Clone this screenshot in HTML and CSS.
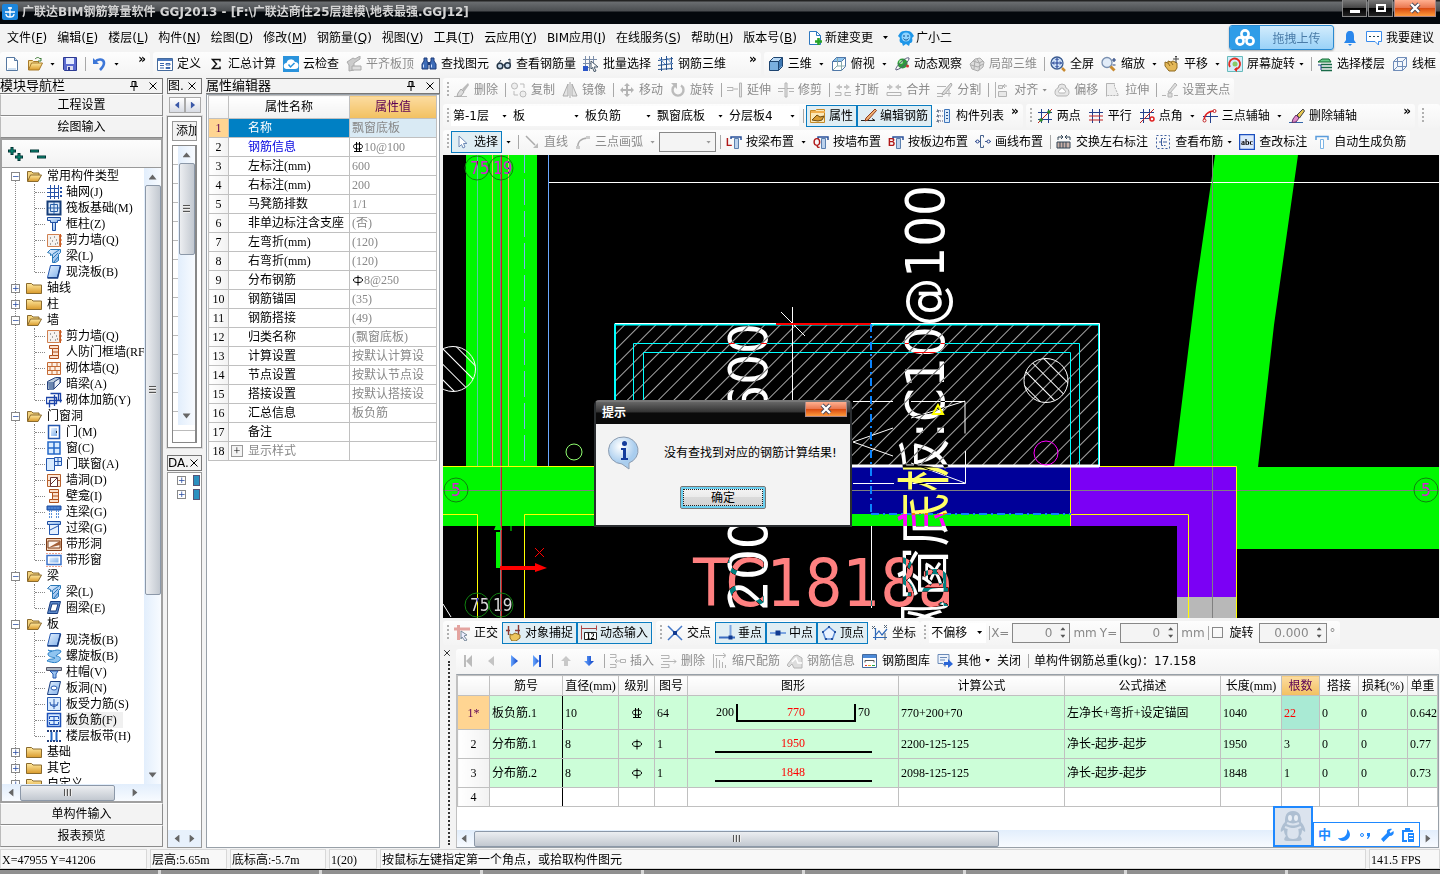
FILE: index.html
```html
<!DOCTYPE html>
<html lang="zh-CN">
<head>
    <meta charset="UTF-8">
    <meta name="viewport" content="width=device-width, initial-scale=1.0">
    <title>广联达BIM钢筋算量软件 GGJ2013</title>
    <link rel="stylesheet" href="styles.css">
</head>
<body>
    <!-- icon sprite -->
    <svg class="sprite" aria-hidden="true">
        <defs>
            <linearGradient id="gold" x1="0" y1="0" x2="0" y2="1"><stop offset="0" stop-color="#ffe9a0"/><stop offset="1" stop-color="#d99a2b"/></linearGradient>
            <linearGradient id="sky" x1="0" y1="0" x2="1" y2="1"><stop offset="0" stop-color="#e8f3ff"/><stop offset="1" stop-color="#7fb0ea"/></linearGradient>
            <linearGradient id="royal" x1="0" y1="0" x2="1" y2="0"><stop offset="0" stop-color="#6aa8ff"/><stop offset="1" stop-color="#0a3fc4"/></linearGradient>
            <radialGradient id="bubble" cx=".4" cy=".3"><stop offset="0" stop-color="#fff"/><stop offset="1" stop-color="#a9cdee"/></radialGradient>
            <pattern id="hatch" width="11" height="11" patternUnits="userSpaceOnUse" patternTransform="rotate(45)"><path d="M.5 0v11" stroke="#a8a8a8"/></pattern>
            <pattern id="hatch-back" width="11" height="11" patternUnits="userSpaceOnUse" patternTransform="rotate(-45)"><path d="M.5 0v11" stroke="#fff"/></pattern>
        </defs>
        <symbol id="new" viewBox="0 0 16 16"><path d="M2.500 1.500h8l3 3v10h-11z" fill="#fff" stroke="#5577a0"/><path d="M10.500 1.500v3h3" fill="#cfe0f2" stroke="#5577a0"/><path d="M4 13h8" stroke="#cfe0f2" stroke-width="2"/></symbol>
        <symbol id="open" viewBox="0 0 16 16"><path d="M1.500 14V4.500h4l1 1h5V8" fill="#f6d98c" stroke="#a87a28"/><path d="M1.500 14l3-7h11l-3.500 7z" fill="url(#gold)" stroke="#a87a28"/><path d="M8 3c2-2 4-2 5 0l1-1v3h-3" fill="none" stroke="#3b7a34"/></symbol>
        <symbol id="save" viewBox="0 0 16 16"><path d="M1.500 1.500h13v13h-12l-1-1z" fill="#5c6bd0" stroke="#2c3a92"/><path d="M4 2h8v6H4z" fill="#e6ecff"/><path d="M5 10h6v4H5z" fill="#dde"/><path d="M6 11h2v3H6z" fill="#2c3a92"/></symbol>
        <symbol id="undo" viewBox="0 0 16 16"><path d="M2 2v6h6z" fill="#3d77d8"/><path d="M4 6c3-4 9-3 9 1 0 3-2 5-4 7" fill="none" stroke="#3d77d8" stroke-width="2.600"/></symbol>
        <symbol id="define" viewBox="0 0 16 16"><path d="M.5 2.500h15v12H.5z" fill="#fff" stroke="#456a9c"/><path d="M1 3h14v2H1z" fill="#4c7ac0"/><path d="M3 7.500h4M3 9.500h4M3 12h4M9 7.500h4v1.500h-4zM9 11.500h4v1h-4z" fill="none" stroke="#3b67ad"/></symbol>
        <symbol id="sigma" viewBox="0 0 16 16"><path d="M12 5.500V3.500H4.500l4 4.500-4 4.500H12v-2" fill="none" stroke="#111" stroke-width="1.500"/></symbol>
        <symbol id="cloudcheck" viewBox="0 0 16 16"><path d="M0 0h16v16H0z" fill="#2a93dc"/><path d="M4 13a3 3 0 0 1-.5-6A4.500 4.500 0 0 1 12 6a3.500 3.500 0 0 1 0 7z" fill="#fff"/><path d="M5.500 8.500l2 2.500 4-4" fill="none" stroke="#2a93dc" stroke-width="1.500"/></symbol>
        <symbol id="slabtop" viewBox="0 0 16 16"><path d="M1 6l6-4 2 1 5-3v3L8 7v7l-5 1V9z" fill="#ccc" stroke="#aaa"/><path d="M6 10h9v4H6z" fill="#ddd" stroke="#aaa"/></symbol>
        <symbol id="binocs" viewBox="0 0 16 16"><path d="M3 2h3v3l1 2v6H1V8l2-3zM10 2h3v3l2 3v5H9V7l1-2z" fill="#3d6cb8" stroke="#1c3a78"/><path d="M7 6h2v3H7z" fill="#1c3a78"/><path d="M2.500 8.500v3M10.500 8.500v3" stroke="#cfe0ff"/></symbol>
        <symbol id="glasses" viewBox="0 0 16 16"><circle cx="4" cy="10" r="2.800" fill="#cde" stroke="#234" stroke-width="1.500"/><circle cx="11.500" cy="9.500" r="2.800" fill="#cde" stroke="#234" stroke-width="1.500"/><path d="M7 9h2M2 8l3-4M14 8V3l-2 1" stroke="#234" fill="none"/></symbol>
        <symbol id="batch" viewBox="0 0 16 16"><path d="M2.500 0v15M6.500 0v15M10.500 0v9M0 3.500h14M0 7.500h9M0 11.500h7" stroke="#7a8ca8" fill="none"/><path d="M0 10h5v5H0z" fill="#2a55c8"/><path d="M8 5l7 6h-4l2 4-2 .5-1.500-4L8 13z" fill="#fff" stroke="#456"/></symbol>
        <symbol id="rebar3d" viewBox="0 0 16 16"><path d="M3.500 1v14M8.500 0v14M13.500 1v13M0 4.500l15-2M0 9.500l15-2M0 13.500l15-1" stroke="#24508c" fill="none"/><path d="M1 2l6 6M9 2l5 6" stroke="#6a9ad8"/></symbol>
        <symbol id="cube" viewBox="0 0 16 16"><path d="M1.500 5.500l4-4h9v9l-4 4h-9z" fill="#b8d8f4" stroke="#1d4470"/><path d="M2 6h8v8H2z" fill="#79afe0"/><path d="M10 6l4-4v8l-4 4z" fill="#3e78b4"/><path d="M1.500 5.500h9v9M10.500 5.500l4-4" fill="none" stroke="#1d4470"/></symbol>
        <symbol id="topview" viewBox="0 0 16 16"><path d="M1.500 5.500l4-4h9v9l-4 4h-9z" fill="#fff" stroke="#5078a8"/><path d="M1.500 5.500l4-4h9l-4 4z" fill="#8fc4ee" stroke="#5078a8"/><path d="M10.500 5.500v9M6.500 2v8M2 14l4-4h8" fill="none" stroke="#8aa"/></symbol>
        <symbol id="orbit" viewBox="0 0 16 16"><circle cx="8.500" cy="7.500" r="5" fill="#2f9a3a"/><circle cx="7" cy="6" r="2" fill="#a6e6a0"/><path d="M2 14C0 12 12 0 15 2c1 2-7 11-13 12z" fill="none" stroke="#557"/><circle cx="13.500" cy="10" r="1.500" fill="#c33"/></symbol>
        <symbol id="local3d" viewBox="0 0 16 16"><path d="M1 8l5-5 5-1 4 4-1 5-5 4-6-2z" fill="#ddd" stroke="#aaa"/><path d="M4 5l6 2 4-2M8 3l3 5-1 6M2 9l7 2 5-3M6 4l-1 9" fill="none" stroke="#aaa"/></symbol>
        <symbol id="fit" viewBox="0 0 16 16"><circle cx="7" cy="7" r="6" fill="#cfe2f8" stroke="#3a5a90" stroke-width="1.300"/><path d="M12 12l3 3" stroke="#c88a30" stroke-width="2.500"/><path d="M7 2.500v9M2.500 7h9M5.500 4L7 2.500 8.500 4M5.500 10L7 11.500 8.500 10M4 5.500L2.500 7 4 8.500M10 5.500L11.500 7 10 8.500" stroke="#1c3a90" fill="none"/></symbol>
        <symbol id="zoomer" viewBox="0 0 16 16"><circle cx="6" cy="6.500" r="5" fill="#e2ecf8" stroke="#7a90b0" stroke-width="1.300"/><path d="M9.500 10.500l4 4" stroke="#c88a30" stroke-width="3"/><path d="M11 4h4M13 2v4M11.500 9h3" stroke="#24407c" stroke-width="1.200"/></symbol>
        <symbol id="pan" viewBox="0 0 16 16"><path d="M1 6l3 1V5l3 1 2-1 4 2v5l-2 3H5l-4-5z" fill="#e4b858" stroke="#8f6a20"/><path d="M4 7l2 3M7 6l2 3" stroke="#8f6a20"/><path d="M12 0v7M9 3h6M11 1l1-1 1 1" stroke="#444" fill="none"/></symbol>
        <symbol id="screenrot" viewBox="0 0 16 16"><path d="M.5.5h15v15H.5z" fill="#d4ecfa" stroke="#6bb"/><path d="M3 11A5.500 5.500 0 1 1 8 13.500" fill="none" stroke="#e02c20" stroke-width="1.800"/><path d="M10 11v5l-3-2.500z" fill="#e02c20"/><circle cx="8" cy="8" r="2.500" fill="#8c6"/></symbol>
        <symbol id="floors" viewBox="0 0 16 16"><path d="M5 3L1 6h13l-2-3z" fill="#6c8" stroke="#163"/><path d="M4 8.500h11M4 11.500h11M4 14.500h11" stroke="#186a48" stroke-width="1.700"/><path d="M1 9h3v5" fill="none" stroke="#23408c"/></symbol>
        <symbol id="wire" viewBox="0 0 16 16"><path d="M1.500 5.500l4-4h9v9l-4 4h-9zM1.500 5.500h9v9M10.500 5.500l4-4M5.500 1.500v9h9M1.500 14.500l4-4" fill="#f2f6fc" stroke="#6f8cb8"/></symbol>
        <symbol id="newdoc" viewBox="0 0 16 16"><path d="M2.500 1.500h7l4 4v9h-11z" fill="#fff" stroke="#2e78c0"/><path d="M9.500 1.500v4h4" fill="none" stroke="#2e78c0"/><path d="M11.500 8v7M8 11.500h7" stroke="#28a428" stroke-width="2.600"/></symbol>
        <symbol id="mascot" viewBox="0 0 16 16"><path d="M2 3c2-3 10-3 12 0l2 3-2 2c1 3 0 5-2 5l-1 3-3-2-3 2-1-3c-2 0-3-2-2-5L0 6z" fill="#1e96e8"/><circle cx="8" cy="7" r="4.500" fill="#8fd4ff"/><path d="M6 5v2M10 5v2M5.500 8.500c1 2 4 2 5 0" stroke="#0b4a88" fill="none"/></symbol>
        <symbol id="bell" viewBox="0 0 16 16"><path d="M8 1c3 0 4 2 4 5v4l2 3H2l2-3V6c0-3 1-5 4-5zM6 14h4l-2 2z" fill="#2a87ec"/></symbol>
        <symbol id="chat" viewBox="0 0 16 16"><path d="M.5 1.500h15v10h-3v3.500L9 11.500H.5z" fill="#fff" stroke="#3a8cec"/><path d="M3 6.500h2M7 6.500h2M11 6.500h2" stroke="#245"/></symbol>
        <symbol id="netdisk" viewBox="0 0 20 18"><g fill="none" stroke="#fff" stroke-width="2.600"><circle cx="10" cy="5" r="3.600"/><circle cx="5" cy="12" r="3.600"/><circle cx="15" cy="12" r="3.600"/></g></symbol>
        <symbol id="brush" viewBox="0 0 16 16"><path d="M0 14.500h13" stroke="#bbb"/><path d="M4 11l3-4 3 3-3 4-4 .5z" fill="#ddd" stroke="#aaa"/><path d="M8 7l6-6 1 2-5 7z" fill="#bbb"/></symbol>
        <symbol id="copy" viewBox="0 0 16 16"><circle cx="3.500" cy="4" r="3" fill="#eee" stroke="#bbb"/><circle cx="12" cy="12" r="3" fill="#eee" stroke="#bbb"/><path d="M9 2h4v4M3 9v4h4" stroke="#bbb" fill="none"/></symbol>
        <symbol id="mirror" viewBox="0 0 16 16"><path d="M6 2v12H1zM10 2v12h5z" fill="#e4e4e4" stroke="#aaa"/><path d="M8 0v16" stroke="#aaa"/></symbol>
        <symbol id="move" viewBox="0 0 16 16"><path d="M8 2v12M2 8h12" stroke="#b4b4b4" stroke-width="2"/><path d="M5 4l3-3 3 3zM5 12l3 3 3-3zM4 5L1 8l3 3zM12 5l3 3-3 3z" fill="#b4b4b4"/></symbol>
        <symbol id="rotate" viewBox="0 0 16 16"><path d="M5 3.500a5.500 5.500 0 1 0 6 0" fill="none" stroke="#bbb" stroke-width="2.400"/><path d="M1 1h6v6z" fill="#bbb"/></symbol>
        <symbol id="extend" viewBox="0 0 16 16"><path d="M0 5.500h6v3H0M7 7h4" fill="none" stroke="#b4b4b4"/><path d="M12.500 1h2v14h-2z" fill="#e4e4e4" stroke="#b4b4b4"/></symbol>
        <symbol id="trim" viewBox="0 0 16 16"><path d="M0 6.500h16M0 9.500h5M11 9.500h5" stroke="#b4b4b4"/><path d="M7 1h2v14H7z" fill="#e4e4e4" stroke="#b4b4b4"/></symbol>
        <symbol id="break" viewBox="0 0 16 16"><path d="M0 10.500h6v3H0M16 10.500h-6v3h6" fill="none" stroke="#b4b4b4"/><path d="M1 5l4-3v2h2v2H5v2zM15 5l-4-3v2H9v2h2v2z" fill="#c4c4c4"/></symbol>
        <symbol id="merge" viewBox="0 0 16 16"><path d="M1 10.500h14v3H1z" fill="none" stroke="#b4b4b4"/><path d="M7 5L3 2v2H1v2h2v2zM9 5l4-3v2h2v2h-2v2z" fill="#c4c4c4"/></symbol>
        <symbol id="split" viewBox="0 0 16 16"><path d="M0 4.500h9M0 11.500h14M12 7.500v7M0 14.500h6" fill="none" stroke="#b4b4b4"/><path d="M14 1l1 2-7 9-3 1 1-3z" fill="#ddd" stroke="#aaa"/></symbol>
        <symbol id="align" viewBox="0 0 16 16"><path d="M1.500 0v16M4.500 3.500h4v3h-4zM4.500 9.500h8v5h-8zM13 4H9l2-2M9 4l2 2" fill="#e8e8e8" stroke="#b4b4b4"/></symbol>
        <symbol id="offset" viewBox="0 0 16 16"><path d="M4 6a4 4 0 0 1 8 0c4 1 4 8 0 8H4c-4 0-4-7 0-8z" fill="#e6e6e6" stroke="#b4b4b4"/><path d="M6 8a2 2 0 0 1 4 0c2 0 2 3 0 3H6c-2 0-2-3 0-3z" fill="#fff" stroke="#b4b4b4"/></symbol>
        <symbol id="stretch" viewBox="0 0 16 16"><path d="M1.500 1.500h8v3l4 9h-12z" fill="#eee" stroke="#b4b4b4" stroke-dasharray="2 1"/><path d="M1.500 14.500v-13h8" fill="none" stroke="#b4b4b4"/></symbol>
        <symbol id="grip-edit" viewBox="0 0 16 16"><path d="M0 13.500h4M12 13.500h4M6 11h4v4H6z" fill="#ddd" stroke="#b4b4b4"/><path d="M13 1l2 2-7 8-2-1z" fill="#ddd" stroke="#b4b4b4"/></symbol>
        <symbol id="props" viewBox="0 0 16 16"><path d="M.5 2.500h5l1-1h8v13H.5z" fill="#fbe8b8" stroke="#c48a28"/><path d="M1 3h14v2H1z" fill="#f0b050"/><path d="M2 12l5-5 3 2 4-1-2 4-4 1z" fill="#d89c34" stroke="#6c4a10"/></symbol>
        <symbol id="pencil" viewBox="0 0 16 16"><path d="M0 12.500h14l-3-2" fill="none" stroke="#222"/><path d="M14 1l1.500 1.500L7 12l-3 1 1-3z" fill="#f0b070" stroke="#8c3a1c"/></symbol>
        <symbol id="list" viewBox="0 0 16 16"><path d="M1 2h2v2H1zM1 7h2v2H1zM1 12h2v2H1zM4 3h3M4 8h3M4 13h3" fill="#8aa" stroke="#557" stroke-dasharray="1 1"/><path d="M8.500 1.500h5v13h-5z" fill="#dcebfb" stroke="#3f76bb"/><path d="M10 4.500h2M10 7.500h2M10 10.500h2" stroke="#24508c"/></symbol>
        <symbol id="twopt" viewBox="0 0 16 16"><path d="M4.500 1v14M11.500 1v14M1 4.500h14M1 11.500h14" stroke="#24408c"/><path d="M1 15L15 1" stroke="#c02020"/><circle cx="4" cy="12" r="1.800" fill="#2a8a2a"/><circle cx="12" cy="4" r="1.800" fill="#2a8a2a"/></symbol>
        <symbol id="parallel" viewBox="0 0 16 16"><path d="M4.500 1v14M11.500 1v14M1 4.500h14" stroke="#24408c"/><path d="M1 8h14M1 12h14" stroke="#c02020"/></symbol>
        <symbol id="ptangle" viewBox="0 0 16 16"><path d="M4.500 1v14M10.500 1v9M1 4.500h14M1 10.500h10" stroke="#24408c"/><path d="M1 15L15 1" stroke="#c02020"/><circle cx="13" cy="11" r="2" fill="none" stroke="#e02020" stroke-width="1.500"/></symbol>
        <symbol id="arcaxis" viewBox="0 0 16 16"><path d="M8.500 3v12M1 8.500h15" stroke="#24408c"/><path d="M2 13C2 7 6 3 12 3" fill="none" stroke="#e02020" stroke-width="1.500"/><circle cx="2.500" cy="12.500" r="1.500" fill="#fff" stroke="#c02020"/><circle cx="12.500" cy="3" r="1.500" fill="#fff" stroke="#c02020"/></symbol>
        <symbol id="delaxis" viewBox="0 0 16 16"><path d="M0 14.500h14" stroke="#36a"/><path d="M4 11l3-4 3 3-3 4-4 .5z" fill="#e08acc" stroke="#636"/><path d="M8 7l6-6 1.500 2-5 7z" fill="#e8c850" stroke="#444"/></symbol>
        <symbol id="cursor" viewBox="0 0 16 16"><path d="M4 2v11l2.500-2.500L8 14l2-1-1.500-3.500H12z" fill="#fff" stroke="#6f8cb8"/></symbol>
        <symbol id="line" viewBox="0 0 16 16"><path d="M2 2l9 9" stroke="#aaa" stroke-width="1.500"/><path d="M14 9v5H9z" fill="#bbb"/></symbol>
        <symbol id="arc3" viewBox="0 0 16 16"><path d="M3 14C2 8 6 4 13 4" fill="none" stroke="#aaa" stroke-width="1.500"/><path d="M1 12h4v3H1zM11 2h4v3h-4z" fill="#ccc"/></symbol>
        <symbol id="tee" viewBox="0 0 16 16"><path d="M8.500 4.500h4v10h-4z" fill="#bcd2ec" stroke="#5a7fae"/><path d="M5 5V3h10v3" fill="none" stroke="#28509a" stroke-width="1.500"/></symbol>
        <symbol id="lineset" viewBox="0 0 16 16"><path d="M0 7.500h6M10 7.500h6M8.500 1.500h-3v12h3M8.500 1.500v2M8.500 13.500v-2" fill="none" stroke="#44608c"/><circle cx="2.500" cy="7.500" r="1.500" fill="#fff" stroke="#24408c"/><circle cx="13.500" cy="7.500" r="1.500" fill="#fff" stroke="#24408c"/></symbol>
        <symbol id="swap" viewBox="0 0 16 16"><path d="M1 8h13v6H1z" fill="#c8b0a8" stroke="#345"/><path d="M4 8v6M7 8v6M10 8v6" stroke="#345"/><path d="M2 6V3h4M14 6V3h-4M5 1l2 2-2 2M11 1L9 3l2 2" fill="none" stroke="#345"/></symbol>
        <symbol id="viewbar" viewBox="0 0 16 16"><path d="M1.500 1.500h13v13h-13z" fill="none" stroke="#3c5c9c" stroke-dasharray="2 2"/><path d="M8 4.500H6.500v7H8M4 8h2M9 4.500h1.500M9 11.500h1.500M8 8h4" fill="none" stroke="#3c5c9c"/></symbol>
        <symbol id="autogen" viewBox="0 0 16 16"><path d="M6.500 5.500h3v9h-3z" fill="#fff" stroke="#7cb4e4"/><path d="M2 6V2.500h12V6" fill="none" stroke="#5a9cdc" stroke-width="1.500"/></symbol>
        <symbol id="ortho" viewBox="0 0 16 16"><path d="M0 4h16M4.500 0v15" stroke="#e4a4a0" stroke-width="3"/><path d="M7 6l6 4-3 1 3 4-2 1-3-4-1 2z" fill="#eef" stroke="#789"/></symbol>
        <symbol id="osnap" viewBox="0 0 16 16"><path d="M0 5.500h4M2.500 1v9M9 5.500h5M12.500 0v9" stroke="#8a3a34" stroke-width="1.400"/><path d="M4 9l2 1 3-2 5 2v3l-4 3H6l-2-3z" fill="#ecc45c" stroke="#8f6a20"/></symbol>
        <symbol id="cross" viewBox="0 0 16 16"><path d="M1 1l14 14M15 1L1 15" stroke="#4478c8" stroke-width="1.500"/><path d="M6 6h4v4H6z" fill="#103a90"/></symbol>
        <symbol id="perp" viewBox="0 0 16 16"><path d="M0 12.500h16" stroke="#3a6cc0" stroke-width="2"/><path d="M11.500 0v12" stroke="#7ba4e0" stroke-width="2"/><path d="M9.500 10.500h4v4h-4z" fill="#103a90"/></symbol>
        <symbol id="mid" viewBox="0 0 16 16"><path d="M0 8h16" stroke="#7ba4e0" stroke-width="2"/><path d="M5.500 5.500h5v5h-5z" fill="#103a90"/></symbol>
        <symbol id="apex" viewBox="0 0 16 16"><path d="M8 2l6 5-2.500 7h-7L2 7z" fill="#eaf3ff" stroke="#5b8cd8" stroke-width="1.500"/><path d="M7 1h2v2H7zM1 6h2v2H1zM13 6h2v2h-2zM4 13h2v2H4zM10 13h2v2h-2z" fill="#24509c"/></symbol>
        <symbol id="coord" viewBox="0 0 16 16"><path d="M3.500 3v12M1 12.500h14M3 11l4-5 3 4 5-6" fill="none" stroke="#2e68b8" stroke-width="1.200"/><path d="M0 1l3 3M3 1L0 4M12 0l3 3M15 0l-3 3M13 8v7" stroke="#567"/></symbol>
        <symbol id="first" viewBox="0 0 16 16"><path d="M4 2h2v12H4zM12 2v12L6 8z" fill="#bbb"/></symbol>
        <symbol id="prev" viewBox="0 0 16 16"><path d="M11 3v10L5 8z" fill="#c4c4c4"/></symbol>
        <symbol id="next" viewBox="0 0 16 16"><path d="M5 2v12l7-6z" fill="url(#royal)"/></symbol>
        <symbol id="last" viewBox="0 0 16 16"><path d="M10 2h2v12h-2zM4 2v12l6-6z" fill="url(#royal)"/></symbol>
        <symbol id="up" viewBox="0 0 16 16"><path d="M8 3l5 5h-3v5H6V8H3z" fill="#c8c8c8"/></symbol>
        <symbol id="down" viewBox="0 0 16 16"><path d="M8 13l5-5h-3V3H6v5H3z" fill="url(#royal)"/></symbol>
        <symbol id="insert" viewBox="0 0 16 16"><path d="M0 1.500h6v3H0M0 11.500h6v3H0M10.500 6.500h5v3h-5zM10 8H5l2-2M5 8l2 2" fill="none" stroke="#b4b4b4"/></symbol>
        <symbol id="remove" viewBox="0 0 16 16"><path d="M0 2.500h8v3H0M0 11.500h8v3H0M2 8.500h13l-2-2M15 8.500l-2 2" fill="none" stroke="#b4b4b4"/></symbol>
        <symbol id="scale" viewBox="0 0 16 16"><path d="M1.500 1v14M3 2.500h10M11 0l3 2.500L11 5M4.500 5v10M7.500 7v8M10.500 9v6M13.500 12v3" fill="none" stroke="#b4b4b4"/></symbol>
        <symbol id="barinfo" viewBox="0 0 16 16"><path d="M0 12l7-9 3-1 5 3v10H7l-2-4-3 3z" fill="#ddd" stroke="#b4b4b4"/><path d="M5 9l4-4 2 5h4" fill="none" stroke="#fff" stroke-width="1.500"/></symbol>
        <symbol id="library" viewBox="0 0 16 16"><path d="M.5 1.500h14v13H.5z" fill="#fff" stroke="#456a9c"/><path d="M1 2h13v3H1z" fill="#4c8ad8"/><path d="M3 9.500V7.500h9v2" fill="none" stroke="#555"/><path d="M3 12.500h2" stroke="#e33"/><path d="M6 12.500h3" stroke="#e8a020"/><path d="M10 12.500h3" stroke="#2a4"/></symbol>
        <symbol id="other" viewBox="0 0 16 16"><path d="M1 1.500h11v9H9l-1 3-2-3H1z" fill="#eef4fc" stroke="#6a8ab8"/><path d="M3 4.500h7M3 7h5" stroke="#6a8ab8"/><path d="M7 9h4V6l5 5-5 4v-3H7z" fill="#2a66d8"/></symbol>
        <symbol id="folder" viewBox="0 0 16 16"><path d="M.5 13.500v-10h5l1.500 1.500h8.500v8.500z" fill="url(#gold)" stroke="#8a6a2c"/></symbol>
        <symbol id="folder-open" viewBox="0 0 16 16"><path d="M1.500 13V3.500h4l1.500 1.500h6V7" fill="#f3d27c" stroke="#8a6a2c"/><path d="M1.500 13.500l3-6.500h11l-3.500 6.500z" fill="url(#gold)" stroke="#8a6a2c"/></symbol>
        <symbol id="t-grid" viewBox="0 0 16 16"><path d="M4.500 1v14M8.500 1v14M12.500 1v14M1 4.500h12M1 8.500h12M1 12.500h12" stroke="#2552a8"/><path d="M14 3h2v2h-2zM14 7h2v2h-2zM14 11h2v2h-2z" fill="#2552a8"/></symbol>
        <symbol id="t-raft" viewBox="0 0 16 16"><path d="M1.500 1.500h13v13h-13z" fill="#dceafa" stroke="#143c78" stroke-width="2"/><path d="M4.500 4.500h7v7h-7zM8 2v12M2 8h12" fill="none" stroke="#2a60a8"/></symbol>
        <symbol id="t-col" viewBox="0 0 16 16"><path d="M1.500 1.500h13v3h-3v2h-7v-2h-3z" fill="url(#sky)" stroke="#1c4ca0"/><path d="M6.500 6.500h3v8h-3z" fill="url(#sky)" stroke="#1c4ca0"/></symbol>
        <symbol id="t-wall" viewBox="0 0 16 16"><path d="M1.500 2.500h12v12h-12z" fill="#f6f2ee" stroke="#d08050"/><path d="M4 6h1M8 5h1M6 9h1M10 8h1M4 12h1M9 12h1M11 11h1" stroke="#555"/><path d="M14.500 2v13M13 4h3M13 8h3M13 12h3" stroke="#c85a20"/></symbol>
        <symbol id="t-beam" viewBox="0 0 16 16"><path d="M1.500 4.500l3-3h10v3l-2 2v6l-3 2h-3v-8l-2 1v-2z" fill="url(#sky)" stroke="#2a78b8"/><path d="M7 6l6-4M7 10l5-5M8 14l4-5" stroke="#2a78b8"/></symbol>
        <symbol id="t-slab" viewBox="0 0 16 16"><path d="M4.500 1.500h10l-3 12h-10z" fill="url(#sky)" stroke="#2458b0"/><path d="M1.500 14h10l3-12" fill="none" stroke="#173c80" stroke-width="1.500"/></symbol>
        <symbol id="t-column-i" viewBox="0 0 16 16"><path d="M3.500 1.500h9v13h-9v-3h3v-7h-3z" fill="#fbe0cc" stroke="#b0501c"/><path d="M6.500 4.500h6M6.500 8h6M6.500 11.500h6" stroke="#b0501c"/></symbol>
        <symbol id="t-brick" viewBox="0 0 16 16"><path d="M1.500 2.500h13v12h-13z" fill="#fdf0e4" stroke="#c46a34"/><path d="M1 6.500h14M1 10.500h14M6 2v4M11 2v4M4 6v4M9 6v4M6 10v4M11 10v4" stroke="#c46a34"/></symbol>
        <symbol id="t-hidden" viewBox="0 0 16 16"><path d="M1.500 5.500l8-4h5v5l-7 7h-6z" fill="#bcd" stroke="#24407c"/><path d="M2 6h6v8H3z" fill="#6a86b0"/><path d="M8 6l6-4v5l-6 6z" fill="#e8eef6" stroke="#24407c"/></symbol>
        <symbol id="t-brickbar" viewBox="0 0 16 16"><path d="M.5 5.500h10v6H.5zM4.500 1.500h10v9M3.500 8v7.500M8.500 3v11M12.500 2v6M3 8.500h13" fill="none" stroke="#1c44a8" stroke-width="1.300"/></symbol>
        <symbol id="t-door" viewBox="0 0 16 16"><path d="M2.500 1.500h11v13h-11z" fill="#fff" stroke="#2458b0" stroke-width="1.500"/><path d="M5 4h6v8H5z" fill="url(#sky)"/><path d="M10 7h1v2h-1z" fill="#123"/></symbol>
        <symbol id="t-window" viewBox="0 0 16 16"><path d="M2 2h12v12H2z" fill="#d9ecff" stroke="#2468c8" stroke-width="1.500"/><path d="M8 2v12M2 8h12" stroke="#2468c8" stroke-width="1.500"/></symbol>
        <symbol id="t-doorwin" viewBox="0 0 16 16"><path d="M.5 2.500h8v12H.5z" fill="#d9ecff" stroke="#2458b0"/><path d="M8.500 1.500h7v8h-7zM12 2v7M9 5.500h6" fill="#d9ecff" stroke="#2458b0"/></symbol>
        <symbol id="t-hole" viewBox="0 0 16 16"><path d="M1.500 2.500h13v12h-13zM1 8.500h14" fill="#fde8d8" stroke="#b8602c"/><path d="M4.500 5.500h7v9h-7z" fill="#fff" stroke="#633"/><path d="M5 12l6-6" stroke="#633"/></symbol>
        <symbol id="t-link" viewBox="0 0 16 16"><path d="M1 2h14v4H1z" fill="#3f74c8" stroke="#1c4ca0"/><path d="M3.500 6v9M5.500 6v9M10.500 6v9M12.500 6v9M2 4h12" stroke="#5a90d8" stroke-dasharray="2 1"/></symbol>
        <symbol id="t-lintel" viewBox="0 0 16 16"><path d="M1.500 1.500h13v3h-13z" fill="url(#sky)" stroke="#1c4ca0"/><path d="M3.500 4.500h9v10h-9z" fill="#e4f0fe" stroke="#2458b0"/><path d="M4 10l8-4" stroke="#2458b0"/></symbol>
        <symbol id="t-strip" viewBox="0 0 16 16"><path d="M.5 2.500h15v12H.5z" fill="#f6d4b8" stroke="#7c3c18"/><path d="M2 5h12v7H2z" fill="#fff6ee" stroke="#7c3c18"/><path d="M2 12l12-7v4z" fill="#a46038"/></symbol>
        <symbol id="t-stripwin" viewBox="0 0 16 16"><path d="M0 1.500h16M0 14.500h16" stroke="#f0a08c" stroke-dasharray="2 1"/><path d="M1 3.500h14v9H1z" fill="#fff" stroke="#3a70c8" stroke-width="1.500"/><path d="M3.500 5.500h9v5h-9z" fill="url(#sky)"/></symbol>
        <symbol id="t-ring" viewBox="0 0 16 16"><path d="M4.500 1.500h10l-3 12h-10z" fill="#5c88c8" stroke="#173c80"/><path d="M6 4h6l-2 7H4z" fill="#fff" stroke="#173c80"/></symbol>
        <symbol id="t-spiral" viewBox="0 0 16 16"><path d="M2 2c5 3 8-2 13 1 0 3-5 3-5 5 4 0 6 3 3 5-4 3-8 1-12 0 2-3 6-1 8-3-3-1-7-1-7-4 0-2 3-2 4-3-2 0-3 0-4-1z" fill="#8fc4f0" stroke="#2a80c8"/></symbol>
        <symbol id="t-cap" viewBox="0 0 16 16"><path d="M.5 3.500h15v3H.5z" fill="#aab4c0" stroke="#556"/><path d="M4 7h8l-2 3v4H7v-4z" fill="#9cc4f0" stroke="#2458b0"/></symbol>
        <symbol id="t-slabhole" viewBox="0 0 16 16"><path d="M4.500 1.500h10l-3 13h-10z" fill="url(#sky)" stroke="#173c80"/><ellipse cx="8" cy="8" rx="3" ry="2" fill="#fff" stroke="#2458b0"/></symbol>
        <symbol id="t-force" viewBox="0 0 16 16"><path d="M1.500 1.500h13v13h-13z" fill="#d9ecff" stroke="#2a5cb0"/><path d="M8 3v10M4 6c0 6 8 6 8 0M4 9h8" fill="none" stroke="#2a5cb0"/></symbol>
        <symbol id="t-neg" viewBox="0 0 16 16"><path d="M1.500 1.500h13v13h-13z" fill="#d9ecff" stroke="#1c50b8" stroke-width="1.500"/><path d="M8 5v7M3 8.500h10M3.500 7V4.500h9V7M3.500 10v2.500h9V10" fill="none" stroke="#1c50b8"/></symbol>
        <symbol id="t-band" viewBox="0 0 16 16"><path d="M1 3h14M1 13h14" stroke="#24407c" stroke-width="2" stroke-dasharray="2 1"/><path d="M5.500 4v9M10.500 4v9" stroke="#2468c8" stroke-width="2"/></symbol>
        <symbol id="bar3" viewBox="0 0 12 12"><ellipse cx="6" cy="5.500" rx="4.500" ry="2.500" fill="none" stroke="#000"/><path d="M4.500 1v9M7.500 1v9M2 10.500h8" stroke="#000"/></symbol>
        <symbol id="bar1" viewBox="0 0 12 12"><ellipse cx="6" cy="6" rx="4.500" ry="2.500" fill="none" stroke="#000"/><path d="M6 1.500v10" stroke="#000"/></symbol>
        <symbol id="pin" viewBox="0 0 10 10"><path d="M3 .5h4v5H3zM1 5.500h8M5 6v4M6 1v4" fill="none" stroke="#000"/></symbol>
        <symbol id="close" viewBox="0 0 10 10"><path d="M1.500 1.500l7 7M8.500 1.500l-7 7" stroke="#000" fill="none"/></symbol>
    </svg>

    <header class="titlebar">
        <svg class="logo" viewBox="0 0 16 16"><rect width="16" height="16" rx="2" fill="#1c86dc"/><path d="M8 3v10M3 8h10M4 10c0 4 8 4 8 0M6 4h4" fill="none" stroke="#fff" stroke-width="1.300"/></svg>
        <h1>广联达BIM钢筋算量软件 GGJ2013 - [F:\广联达商住25层建模\地表最强.GGJ12]</h1>
        <div class="winbtns">
            <button type="button" aria-label="最小化"><svg viewBox="0 0 12 12"><path d="M1 8h10v3H1z" fill="#fff"/></svg></button>
            <button type="button" aria-label="还原"><svg viewBox="0 0 12 12"><path d="M2 3h8v6H2z" fill="none" stroke="#fff" stroke-width="2"/></svg></button>
            <button type="button" class="win-close" aria-label="关闭"><svg viewBox="0 0 12 12"><path d="M2 2l8 8M10 2l-8 8" stroke="#445" stroke-width="4"/><path d="M2 2l8 8M10 2l-8 8" stroke="#fff" stroke-width="2.400"/></svg></button>
        </div>
    </header>

    <nav class="menubar">
        <button type="button">文件(<u>F</u>)</button>
        <button type="button">编辑(<u>E</u>)</button>
        <button type="button">楼层(<u>L</u>)</button>
        <button type="button">构件(<u>N</u>)</button>
        <button type="button">绘图(<u>D</u>)</button>
        <button type="button">修改(<u>M</u>)</button>
        <button type="button">钢筋量(<u>Q</u>)</button>
        <button type="button">视图(<u>V</u>)</button>
        <button type="button">工具(<u>T</u>)</button>
        <button type="button">云应用(<u>Y</u>)</button>
        <button type="button">BIM应用(<u>I</u>)</button>
        <button type="button">在线服务(<u>S</u>)</button>
        <button type="button">帮助(<u>H</u>)</button>
        <button type="button">版本号(<u>B</u>)</button>
        <button type="button" class="tool"><svg><use href="#newdoc"/></svg>新建变更</button>
        <i class="caret"></i>
        <button type="button" class="tool"><svg><use href="#mascot"/></svg>广小二</button>
        <div class="menu-right">
            <button type="button" class="upload"><span class="upload-logo"><svg><use href="#netdisk"/></svg></span><span class="upload-text">拖拽上传</span></button>
            <button type="button" class="tool" aria-label="通知"><svg><use href="#bell"/></svg></button>
            <button type="button" class="tool"><svg><use href="#chat"/></svg>我要建议</button>
        </div>
    </nav>

    <div class="bar">
        <div class="band file-band">
            <button type="button" class="tool" aria-label="新建"><svg><use href="#new"/></svg></button>
            <button type="button" class="tool" aria-label="打开"><svg><use href="#open"/></svg></button>
            <i class="caret"></i>
            <button type="button" class="tool" aria-label="保存"><svg><use href="#save"/></svg></button>
            <i class="sep"></i>
            <button type="button" class="tool" aria-label="撤销"><svg><use href="#undo"/></svg></button>
            <i class="caret"></i>
            <b class="more">»</b>
        </div>
        <div class="band">
            <button type="button" class="tool"><svg><use href="#define"/></svg>定义</button>
            <button type="button" class="tool"><svg><use href="#sigma"/></svg>汇总计算</button>
            <button type="button" class="tool"><svg><use href="#cloudcheck"/></svg>云检查</button>
            <button type="button" class="tool" disabled><svg><use href="#slabtop"/></svg>平齐板顶</button>
            <button type="button" class="tool"><svg><use href="#binocs"/></svg>查找图元</button>
            <button type="button" class="tool"><svg><use href="#glasses"/></svg>查看钢筋量</button>
            <button type="button" class="tool"><svg><use href="#batch"/></svg>批量选择</button>
            <button type="button" class="tool"><svg><use href="#rebar3d"/></svg>钢筋三维</button>
            <b class="more more-far">»</b>
        </div>
        <div class="band">
            <button type="button" class="tool"><svg><use href="#cube"/></svg>三维</button>
            <i class="caret"></i>
            <button type="button" class="tool"><svg><use href="#topview"/></svg>俯视</button>
            <i class="caret"></i>
            <button type="button" class="tool"><svg><use href="#orbit"/></svg>动态观察</button>
            <button type="button" class="tool" disabled><svg><use href="#local3d"/></svg>局部三维</button>
            <i class="sep"></i>
            <button type="button" class="tool"><svg><use href="#fit"/></svg>全屏</button>
            <button type="button" class="tool"><svg><use href="#zoomer"/></svg>缩放</button>
            <i class="caret"></i>
            <button type="button" class="tool"><svg><use href="#pan"/></svg>平移</button>
            <i class="caret"></i>
            <button type="button" class="tool"><svg><use href="#screenrot"/></svg>屏幕旋转<i class="caret"></i></button>
            <i class="sep"></i>
            <button type="button" class="tool"><svg><use href="#floors"/></svg>选择楼层</button>
            <button type="button" class="tool"><svg><use href="#wire"/></svg>线框</button>
        </div>
    </div>

    <div class="workspace">
        <!-- module navigation -->
        <aside class="navpane">
            <div class="pane-head"><h2>模块导航栏</h2><svg><use href="#pin"/></svg><svg><use href="#close"/></svg></div>
            <button type="button" class="nav-tab">工程设置</button>
            <button type="button" class="nav-tab">绘图输入</button>
            <div class="tree-frame">
                <div class="tree-tools">
                    <svg viewBox="0 0 16 16"><path d="M5 1v8M1 5h8M12 7v8M8 11h8" stroke="#033" stroke-width="3"/><path d="M5 2v6M2 5h6M12 8v6M9 11h6" stroke="#0a9a80"/></svg>
                    <svg viewBox="0 0 16 16"><path d="M0 5h9M7 11h9" stroke="#033" stroke-width="3"/><path d="M1 5h7M8 11h7" stroke="#0a9a80"/></svg>
                </div>
                <div class="tree-body">
                    <ul class="tree">
                        <li><span class="node"><i class="tg">−</i><svg><use href="#folder-open"/></svg>常用构件类型</span>
                            <ul>
                                <li><svg><use href="#t-grid"/></svg>轴网(J)</li>
                                <li><svg><use href="#t-raft"/></svg>筏板基础(M)</li>
                                <li><svg><use href="#t-col"/></svg>框柱(Z)</li>
                                <li><svg><use href="#t-wall"/></svg>剪力墙(Q)</li>
                                <li><svg><use href="#t-beam"/></svg>梁(L)</li>
                                <li><svg><use href="#t-slab"/></svg>现浇板(B)</li>
                            </ul>
                        </li>
                        <li><span class="node"><i class="tg">+</i><svg><use href="#folder"/></svg>轴线</span></li>
                        <li><span class="node"><i class="tg">+</i><svg><use href="#folder"/></svg>柱</span></li>
                        <li><span class="node"><i class="tg">−</i><svg><use href="#folder-open"/></svg>墙</span>
                            <ul>
                                <li><svg><use href="#t-wall"/></svg>剪力墙(Q)</li>
                                <li><svg><use href="#t-column-i"/></svg>人防门框墙(RF)</li>
                                <li><svg><use href="#t-brick"/></svg>砌体墙(Q)</li>
                                <li><svg><use href="#t-hidden"/></svg>暗梁(A)</li>
                                <li><svg><use href="#t-brickbar"/></svg>砌体加筋(Y)</li>
                            </ul>
                        </li>
                        <li><span class="node"><i class="tg">−</i><svg><use href="#folder-open"/></svg>门窗洞</span>
                            <ul>
                                <li><svg><use href="#t-door"/></svg>门(M)</li>
                                <li><svg><use href="#t-window"/></svg>窗(C)</li>
                                <li><svg><use href="#t-doorwin"/></svg>门联窗(A)</li>
                                <li><svg><use href="#t-hole"/></svg>墙洞(D)</li>
                                <li><svg><use href="#t-column-i"/></svg>壁龛(I)</li>
                                <li><svg><use href="#t-link"/></svg>连梁(G)</li>
                                <li><svg><use href="#t-lintel"/></svg>过梁(G)</li>
                                <li><svg><use href="#t-strip"/></svg>带形洞</li>
                                <li><svg><use href="#t-stripwin"/></svg>带形窗</li>
                            </ul>
                        </li>
                        <li><span class="node"><i class="tg">−</i><svg><use href="#folder-open"/></svg>梁</span>
                            <ul>
                                <li><svg><use href="#t-beam"/></svg>梁(L)</li>
                                <li><svg><use href="#t-ring"/></svg>圈梁(E)</li>
                            </ul>
                        </li>
                        <li><span class="node"><i class="tg">−</i><svg><use href="#folder-open"/></svg>板</span>
                            <ul>
                                <li><svg><use href="#t-slab"/></svg>现浇板(B)</li>
                                <li><svg><use href="#t-spiral"/></svg>螺旋板(B)</li>
                                <li><svg><use href="#t-cap"/></svg>柱帽(V)</li>
                                <li><svg><use href="#t-slabhole"/></svg>板洞(N)</li>
                                <li><svg><use href="#t-force"/></svg>板受力筋(S)</li>
                                <li><svg><use href="#t-neg"/></svg><span class="picked">板负筋(F)</span></li>
                                <li><svg><use href="#t-band"/></svg>楼层板带(H)</li>
                            </ul>
                        </li>
                        <li><span class="node"><i class="tg">+</i><svg><use href="#folder"/></svg>基础</span></li>
                        <li><span class="node"><i class="tg">+</i><svg><use href="#folder"/></svg>其它</span></li>
                        <li><span class="node"><i class="tg">+</i><svg><use href="#folder"/></svg>自定义</span></li>
                    </ul>
                    <div class="vscroll"><i class="arr arr-up"></i><div class="thumb tree-thumb"><i class="ribs"></i></div><i class="arr arr-down"></i></div>
                </div>
                <div class="hscroll tree-hscroll"><i class="arr arr-left"></i><div class="thumb"><i class="ribs"></i></div><i class="arr arr-right"></i></div>
            </div>
            <button type="button" class="nav-tab">单构件输入</button>
            <button type="button" class="nav-tab">报表预览</button>
        </aside>

        <!-- narrow component / drawing list -->
        <aside class="slim">
            <div class="pane-head"><h2>图.</h2><svg><use href="#close"/></svg></div>
            <div class="pager"><button type="button" aria-label="上一页"><i class="arr arr-left"></i></button><button type="button" aria-label="下一页"><i class="arr arr-right"></i></button></div>
            <div class="slim-box">
                <button type="button" class="add">添加</button>
                <div class="slim-list"><div class="vscroll"><i class="arr arr-up"></i><div class="thumb"><i class="ribs"></i></div><i class="arr arr-down"></i></div></div>
            </div>
            <div class="pane-head slim-second"><h2>DA.</h2><svg><use href="#close"/></svg></div>
            <div class="slim-tree">
                <div><i class="tg">+</i><i class="chip"></i></div>
                <div><i class="tg">+</i><i class="chip"></i></div>
                <div class="slim-arrows"><i class="arr arr-left"></i><i class="arr arr-right"></i></div>
            </div>
        </aside>

        <!-- property editor -->
        <aside class="propspane">
            <div class="pane-head"><h2>属性编辑器</h2><svg><use href="#pin"/></svg><svg><use href="#close"/></svg></div>
            <div class="props-frame">
                <table class="grid props">
                    <colgroup><col class="c-no"><col class="c-name"><col></colgroup>
                    <thead><tr><th></th><th>属性名称</th><th class="hot">属性值</th></tr></thead>
                    <tbody>
                        <tr class="current"><th class="hot">1</th><td>名称</td><td>飘窗底板</td></tr>
                        <tr class="key"><th>2</th><td>钢筋信息</td><td><svg><use href="#bar3"/></svg>10@100</td></tr>
                        <tr><th>3</th><td>左标注(mm)</td><td>600</td></tr>
                        <tr><th>4</th><td>右标注(mm)</td><td>200</td></tr>
                        <tr><th>5</th><td>马凳筋排数</td><td>1/1</td></tr>
                        <tr><th>6</th><td>非单边标注含支座</td><td>(否)</td></tr>
                        <tr><th>7</th><td>左弯折(mm)</td><td>(120)</td></tr>
                        <tr><th>8</th><td>右弯折(mm)</td><td>(120)</td></tr>
                        <tr><th>9</th><td>分布钢筋</td><td><svg><use href="#bar1"/></svg>8@250</td></tr>
                        <tr><th>10</th><td>钢筋锚固</td><td>(35)</td></tr>
                        <tr><th>11</th><td>钢筋搭接</td><td>(49)</td></tr>
                        <tr><th>12</th><td>归类名称</td><td>(飘窗底板)</td></tr>
                        <tr><th>13</th><td>计算设置</td><td>按默认计算设</td></tr>
                        <tr><th>14</th><td>节点设置</td><td>按默认节点设</td></tr>
                        <tr><th>15</th><td>搭接设置</td><td>按默认搭接设</td></tr>
                        <tr><th>16</th><td>汇总信息</td><td>板负筋</td></tr>
                        <tr><th>17</th><td>备注</td><td></td></tr>
                        <tr class="more-row"><th>18</th><td><i class="expand">+</i>显示样式</td><td></td></tr>
                    </tbody>
                </table>
            </div>
        </aside>

        <main class="main">
            <div class="bar">
                <div class="band">
                    <i class="grip"></i>
                    <button type="button" class="tool" disabled><svg><use href="#brush"/></svg>删除</button>
                    <i class="sep"></i>
                    <button type="button" class="tool" disabled><svg><use href="#copy"/></svg>复制</button>
                    <button type="button" class="tool" disabled><svg><use href="#mirror"/></svg>镜像</button>
                    <i class="sep"></i>
                    <button type="button" class="tool" disabled><svg><use href="#move"/></svg>移动</button>
                    <button type="button" class="tool" disabled><svg><use href="#rotate"/></svg>旋转</button>
                    <i class="sep"></i>
                    <button type="button" class="tool" disabled><svg><use href="#extend"/></svg>延伸</button>
                    <button type="button" class="tool" disabled><svg><use href="#trim"/></svg>修剪</button>
                    <i class="sep"></i>
                    <button type="button" class="tool" disabled><svg><use href="#break"/></svg>打断</button>
                    <button type="button" class="tool" disabled><svg><use href="#merge"/></svg>合并</button>
                    <button type="button" class="tool" disabled><svg><use href="#split"/></svg>分割</button>
                    <i class="sep"></i>
                    <button type="button" class="tool" disabled><svg><use href="#align"/></svg>对齐<i class="caret"></i></button>
                    <button type="button" class="tool" disabled><svg><use href="#offset"/></svg>偏移</button>
                    <button type="button" class="tool" disabled><svg><use href="#stretch"/></svg>拉伸</button>
                    <i class="sep"></i>
                    <button type="button" class="tool" disabled><svg><use href="#grip-edit"/></svg>设置夹点</button>
                </div>
            </div>
            <div class="bar">
                <div class="band">
                    <i class="grip"></i>
                    <div class="joined">
                        <label class="combo combo-short"><select aria-label="楼层"><option>第-1层</option></select><i class="caret"></i></label>
                        <label class="combo"><select aria-label="构件类别"><option>板</option></select><i class="caret"></i></label>
                        <label class="combo"><select aria-label="构件类型"><option>板负筋</option></select><i class="caret"></i></label>
                        <label class="combo"><select aria-label="构件"><option>飘窗底板</option></select><i class="caret"></i></label>
                        <label class="combo"><select aria-label="分层"><option>分层板4</option></select><i class="caret"></i></label>
                    </div>
                    <i class="sep"></i>
                    <div class="joined">
                        <button type="button" class="tool on"><svg><use href="#props"/></svg>属性</button>
                        <button type="button" class="tool on"><svg><use href="#pencil"/></svg>编辑钢筋</button>
                    </div>
                    <button type="button" class="tool"><svg><use href="#list"/></svg>构件列表</button>
                    <b class="more">»</b>
                </div>
                <div class="band band-grow">
                    <i class="grip"></i>
                    <button type="button" class="tool"><svg><use href="#twopt"/></svg>两点</button>
                    <button type="button" class="tool"><svg><use href="#parallel"/></svg>平行</button>
                    <button type="button" class="tool"><svg><use href="#ptangle"/></svg>点角</button>
                    <i class="caret"></i>
                    <button type="button" class="tool"><svg><use href="#arcaxis"/></svg>三点辅轴</button>
                    <i class="caret"></i>
                    <button type="button" class="tool"><svg><use href="#delaxis"/></svg>删除辅轴</button>
                    <b class="more">»</b>
                </div>
                <div class="band band-end"><i class="grip"></i></div>
            </div>
            <div class="bar">
                <div class="band">
                    <i class="grip"></i>
                    <div class="joined"><button type="button" class="tool on"><svg><use href="#cursor"/></svg>选择</button></div>
                    <i class="caret"></i>
                    <i class="sep"></i>
                    <button type="button" class="tool" disabled><svg><use href="#line"/></svg>直线</button>
                    <button type="button" class="tool" disabled><svg><use href="#arc3"/></svg>三点画弧</button>
                    <i class="caret dim"></i>
                    <div class="joined"><label class="combo combo-box"><select aria-label="画弧方式" disabled><option></option></select><i class="caret dim"></i></label></div>
                    <i class="sep"></i>
                    <button type="button" class="tool letter"><svg><use href="#tee"/></svg><b>L</b>按梁布置</button>
                    <i class="caret"></i>
                    <button type="button" class="tool letter"><svg><use href="#tee"/></svg><b>Q</b>按墙布置</button>
                    <button type="button" class="tool letter"><svg><use href="#tee"/></svg><b>B</b>按板边布置</button>
                    <button type="button" class="tool"><svg><use href="#lineset"/></svg>画线布置</button>
                    <i class="sep"></i>
                    <button type="button" class="tool"><svg><use href="#swap"/></svg>交换左右标注</button>
                    <button type="button" class="tool"><svg><use href="#viewbar"/></svg>查看布筋<i class="caret"></i></button>
                    <button type="button" class="tool"><svg viewBox="0 0 16 16"><path d="M.5.500h15v15H.5z" fill="#dce9fb" stroke="#1c50c0" stroke-width="1.500"/><text x="8" y="11" text-anchor="middle" class="mark">abc</text></svg>查改标注</button>
                    <button type="button" class="tool"><svg><use href="#autogen"/></svg>自动生成负筋</button>
                </div>
            </div>

            <div class="canvas">
                <svg class="drawing" viewBox="443 155 996 463" preserveAspectRatio="xMinYMin slice">
                    <!-- walls and beams -->
                    <g fill="#00f700">
                        <path d="M466 155h71v312h-71zM443 467h628v59H443zM1236 467h203v82h-203z"/>
                        <path d="M1215 155h83l-24 170-16 142h-84l22-180z"/>
                    </g>
                    <path d="M760 467h310v47H760z" fill="#000099"/>
                    <path d="M1070 466h166v131h-59v-71h-107z" fill="#7b00f5"/>
                    <path d="M1177 597h59v21h-59z" fill="#b8b8b8"/>
                    <g fill="none">
                        <path d="M477.500 155v311" stroke="#58c8a8"/>
                        <path d="M492.500 155v311M508.500 155v311" stroke="#f0b860"/>
                        <path d="M501.500 155v463" stroke="#d02020"/>
                        <path d="M524.500 155v311" stroke="#78b8f0" stroke-dasharray="26 6" stroke-dashoffset="8"/>
                        <path d="M548.500 155v311" stroke="#6aa8ff"/>
                        <path d="M549 182.500h890" stroke="#fff"/>
                        <path d="M443 490.500h996M1212.500 155v463M500.500 155v463" stroke="#808080"/>
                        <path d="M443 466.500h160M443 514.500h34.500V618M603 514.500h-78.500V618M1070.500 526v-59.500h166V618M1070 514.500h118.500V618" stroke="#ff0"/>
                        <path d="M443 604l8 13" stroke="#fff"/>
                    </g>
                    <!-- axis bubbles -->
                    <g fill="none" stroke="#108010">
                        <circle cx="477" cy="168" r="12"/><circle cx="501" cy="168" r="12"/>
                        <circle cx="477" cy="605" r="12"/><circle cx="501" cy="605" r="12"/>
                        <circle cx="456" cy="490" r="12"/><circle cx="1426" cy="490" r="12"/>
                    </g>
                    <g class="axis-no">
                        <text x="470" y="174">75</text><text x="493" y="174">19</text>
                        <text x="470" y="611">75</text><text x="493" y="611">19</text>
                        <text x="451" y="496">5</text><text x="1421" y="496">5</text>
                    </g>
                    <!-- bay window slab -->
                    <path d="M615 324h484v142H615z" fill="url(#hatch)"/>
                    <g fill="none" stroke="#0ff">
                        <path d="M615 466V324.500h484V466" stroke-width="2"/>
                        <path d="M633.500 466V343.500h446V466M643.500 466V352.500h427V466"/>
                    </g>
                    <g fill="none" stroke="#fff">
                        <path d="M615 323.500h484.500V467M792.500 307v93M781 312l24 24M853 401.500h40M911 401.500h54v32M965.500 451v32.500h-53M853 483.500h41M853 442l40-14M853 442l40 14M911 418l54-17M911 463l54 20M871.500 526v82"/>
                        <path d="M760 466h339" stroke-width="3"/>
                        <circle cx="453" cy="369" r="22.500" fill="url(#hatch-back)"/>
                        <circle cx="1046" cy="380.500" r="22" fill="url(#hatch-back)"/>
                    </g>
                    <path d="M776 324h95" stroke="#f00" stroke-width="2"/>
                    <path d="M871 324v190M871 514h200" fill="none" stroke="#0a84ff" stroke-width="2" stroke-dasharray="8 4 2 4"/>
                    <circle cx="574" cy="452" r="8" fill="none" stroke="#90ff70"/>
                    <circle cx="1046" cy="453" r="12" fill="none" stroke="#f0f"/>
                    <!-- UCS arrows -->
                    <path d="M498 568v-36" stroke="#00f700" stroke-width="4"/>
                    <path d="M494 530l4-10 4 10z" fill="#00f700"/>
                    <path d="M508 523l3 3 3-3M511 526v5" fill="none" stroke="#00f700"/>
                    <path d="M500 568h36" stroke="#f00" stroke-width="4"/>
                    <path d="M535 563l12 5-12 4z" fill="#f00"/>
                    <path d="M535 548l9 9M544 548l-9 9" stroke="#f00"/>
                    <!-- annotation -->
                    <text class="note" transform="translate(944 185) rotate(-90)" text-anchor="end">飘窗底板:C10@100</text>
                    <text class="note" transform="translate(767 323) rotate(-90)" text-anchor="end">600</text>
                    <text class="note" transform="translate(767 611) rotate(-90)">200</text>
                    <text class="tag" x="693" y="606">TC1818a</text>
                    <path d="M938 405l5 9h-10z" fill="none" stroke="#ff0" stroke-width="2"/>
                </svg>

                <div class="dialog" role="dialog" aria-labelledby="dialog-title">
                    <div class="dialog-head"><h2 id="dialog-title">提示</h2><button type="button" class="win-close" aria-label="关闭"><svg viewBox="0 0 12 12"><path d="M2 2l8 8M10 2l-8 8" stroke="#445" stroke-width="4"/><path d="M2 2l8 8M10 2l-8 8" stroke="#fff" stroke-width="2.400"/></svg></button></div>
                    <div class="dialog-body">
                        <div class="dialog-msg">
                            <svg viewBox="0 0 32 34"><path d="M16 1a14.500 13.500 0 0 1 5 26v6l-7-5A14.500 13.500 0 0 1 16 1z" fill="url(#bubble)" stroke="#8c9cb0"/><path d="M13 12h5v10h2v2h-7v-2h2v-8h-2z" fill="#143c9c"/><circle cx="16.500" cy="7.500" r="2.500" fill="#143c9c"/></svg>
                            <p>没有查找到对应的钢筋计算结果!</p>
                        </div>
                        <button type="button" class="ok">确定</button>
                    </div>
                </div>
            </div>

            <div class="bar snapbar">
                <div class="band">
                    <i class="grip"></i>
                    <button type="button" class="tool"><svg><use href="#ortho"/></svg>正交</button>
                    <div class="joined">
                        <button type="button" class="tool on"><svg><use href="#osnap"/></svg>对象捕捉</button>
                        <button type="button" class="tool on"><svg viewBox="0 0 16 16"><path d="M.5.500v14M15.500.500v5M1 3.500h14" stroke="#a44" fill="none"/><path d="M3.500 7.500h12v7h-12z" fill="#fff" stroke="#222"/><text x="9.500" y="14" text-anchor="middle" class="mark">12</text></svg>动态输入</button>
                    </div>
                </div>
                <div class="band">
                    <i class="grip"></i>
                    <button type="button" class="tool"><svg><use href="#cross"/></svg>交点</button>
                    <div class="joined">
                        <button type="button" class="tool on"><svg><use href="#perp"/></svg>垂点</button>
                        <button type="button" class="tool on"><svg><use href="#mid"/></svg>中点</button>
                        <button type="button" class="tool on"><svg><use href="#apex"/></svg>顶点</button>
                    </div>
                    <button type="button" class="tool"><svg><use href="#coord"/></svg>坐标</button>
                </div>
                <div class="band offset-band">
                    <i class="grip"></i>
                    <label class="combo combo-mode"><select aria-label="偏移方式"><option>不偏移</option></select><i class="caret"></i></label>
                    <i class="sep"></i>
                    <label for="off-x">X=</label>
                    <span class="spin"><input id="off-x" type="text" value="0" disabled><span class="spin-arrows"><i class="arr arr-up"></i><i class="arr arr-down"></i></span></span>
                    <span>mm</span>
                    <label for="off-y">Y=</label>
                    <span class="spin"><input id="off-y" type="text" value="0" disabled><span class="spin-arrows"><i class="arr arr-up"></i><i class="arr arr-down"></i></span></span>
                    <span>mm</span>
                    <i class="sep"></i>
                    <input type="checkbox" id="rot" class="tick">
                    <label for="rot" class="rot-label">旋转</label>
                    <span class="spin spin-wide"><input type="text" aria-label="旋转角度" value="0.000" disabled><span class="spin-arrows"><i class="arr arr-up"></i><i class="arr arr-down"></i></span></span>
                    <span>°</span>
                </div>
            </div>

            <!-- rebar editor -->
            <section class="editor">
                <div class="editor-side"><svg><use href="#close"/></svg><i></i></div>
                <div class="editor-main">
                    <div class="bar">
                        <div class="band band-grow">
                            <button type="button" class="tool" disabled aria-label="首行"><svg><use href="#first"/></svg></button>
                            <button type="button" class="tool" disabled aria-label="上一行"><svg><use href="#prev"/></svg></button>
                            <button type="button" class="tool" aria-label="下一行"><svg><use href="#next"/></svg></button>
                            <button type="button" class="tool" aria-label="末行"><svg><use href="#last"/></svg></button>
                            <i class="sep"></i>
                            <button type="button" class="tool" disabled aria-label="上移"><svg><use href="#up"/></svg></button>
                            <button type="button" class="tool" aria-label="下移"><svg><use href="#down"/></svg></button>
                            <i class="sep"></i>
                            <button type="button" class="tool" disabled><svg><use href="#insert"/></svg>插入</button>
                            <button type="button" class="tool" disabled><svg><use href="#remove"/></svg>删除</button>
                            <button type="button" class="tool" disabled><svg><use href="#scale"/></svg>缩尺配筋</button>
                            <button type="button" class="tool" disabled><svg><use href="#barinfo"/></svg>钢筋信息</button>
                            <button type="button" class="tool"><svg><use href="#library"/></svg>钢筋图库</button>
                            <button type="button" class="tool"><svg><use href="#other"/></svg>其他<i class="caret"></i></button>
                            <button type="button" class="tool">关闭</button>
                            <i class="sep"></i>
                            <span>单构件钢筋总重(kg)：17.158</span>
                        </div>
                    </div>
                    <div class="sheet">
                        <table class="grid rebar">
                            <colgroup><col class="w-no"><col class="w-name"><col class="w-dia"><col class="w-grade"><col class="w-pic"><col class="w-shape"><col class="w-calc"><col class="w-desc"><col class="w-len"><col class="w-num"><col class="w-lap"><col class="w-loss"><col></colgroup>
                            <thead>
                                <tr><th></th><th>筋号</th><th>直径(mm)</th><th>级别</th><th>图号</th><th>图形</th><th>计算公式</th><th>公式描述</th><th>长度(mm)</th><th class="hot">根数</th><th>搭接</th><th>损耗(%)</th><th>单重</th></tr>
                            </thead>
                            <tbody>
                                <tr class="row-first"><th class="hot">1*</th><td>板负筋.1</td><td>10</td><td class="mid"><svg><use href="#bar3"/></svg></td><td>64</td>
                                    <td class="mid"><div class="shape"><span>200</span><span class="hook">770</span><span>70</span></div></td>
                                    <td>770+200+70</td><td>左净长+弯折+设定锚固</td><td>1040</td><td class="focus">22</td><td>0</td><td>0</td><td>0.642</td></tr>
                                <tr><th>2</th><td>分布筋.1</td><td>8</td><td class="mid"><svg><use href="#bar1"/></svg></td><td>1</td>
                                    <td class="mid"><span class="straight">1950</span></td>
                                    <td>2200-125-125</td><td>净长-起步-起步</td><td>1950</td><td>3</td><td>0</td><td>0</td><td>0.77</td></tr>
                                <tr><th>3</th><td>分布筋.2</td><td>8</td><td class="mid"><svg><use href="#bar1"/></svg></td><td>1</td>
                                    <td class="mid"><span class="straight">1848</span></td>
                                    <td>2098-125-125</td><td>净长-起步-起步</td><td>1848</td><td>1</td><td>0</td><td>0</td><td>0.73</td></tr>
                                <tr class="blank"><th>4</th><td></td><td></td><td></td><td></td><td></td><td></td><td></td><td></td><td></td><td></td><td></td><td></td></tr>
                            </tbody>
                        </table>
                        <div class="hscroll sheet-hscroll"><i class="arr arr-left"></i><div class="thumb"><i class="ribs"></i></div><i class="arr arr-right"></i></div>
                    </div>
                </div>
            </section>
        </main>
    </div>

    <footer class="statusbar">
        <span class="s-xy">X=47955 Y=41206</span>
        <span class="s-h">层高:5.65m</span>
        <span class="s-b">底标高:-5.7m</span>
        <span class="s-n">1(20)</span>
        <span class="s-msg">按鼠标左键指定第一个角点，或拾取构件图元</span>
        <span class="s-fps">141.5 FPS</span>
    </footer>
    <div class="taskbar"></div>

    <!-- input method bar floating over the sheet -->
    <div class="ime">
        <div class="ime-pet"><svg viewBox="0 0 32 34"><path d="M16 2c7 0 8 5 8 11 3 3 5 8 4 10l-3-2c0 3-1 5-2 6 2 2 3 5-1 5H10c-4 0-3-3-1-5-1-1-2-3-2-6l-3 2c-1-2 1-7 4-10C8 7 9 2 16 2z" fill="#aebfd2"/><path d="M11 19c-2 8 0 11 5 11s7-3 5-11z" fill="#dbe3ee"/><ellipse cx="13" cy="9" rx="2" ry="3" fill="#e8eef5"/><ellipse cx="19" cy="9" rx="2" ry="3" fill="#e8eef5"/><path d="M10 14c4 2 8 2 12 0M8 18c6 3 10 3 16 0" fill="none" stroke="#dbe3ee" stroke-width="2"/></svg></div>
        <div class="ime-keys">
            <b>中</b>
            <svg viewBox="0 0 14 14"><path d="M9 1c6 5 2 12-4 12-2 0-4-1-5-3 6 1 10-3 9-9z"/></svg>
            <svg viewBox="0 0 14 14"><circle cx="3" cy="7" r="1.500" fill="none" stroke="#1e88ff"/><path d="M8 5h3v3l-2 3H8l1-3H8z"/></svg>
            <svg viewBox="0 0 14 14"><path d="M1 11l6-6c-1-3 2-5 5-4L9.500 3.500l1 1.500 3-2c1 4-2 5-4 5l-6 6z"/></svg>
            <svg viewBox="0 0 14 14"><path d="M1 2h3V0h5v2h3v2H3v8h3v2H1zM7 5h6v9H7zm1 2v1h4V7zm0 3v1h4v-1z" fill-rule="evenodd"/></svg>
        </div>
    </div>
</body>
</html>
```
FILE: styles.css
```css
* {
    box-sizing: border-box;
}
body {
    margin: 0;
    height: 100vh;
    display: flex;
    flex-direction: column;
    overflow: hidden;
    position: relative;
    background: #f3f3f3;
    color: #000;
    font: 12px/16px "DejaVu Sans", "Noto Sans CJK SC", sans-serif;
}
h1, h2, p, ul {
    margin: 0;
    padding: 0;
    font-size: 12px;
    list-style: none;
}
i {
    font-style: normal;
}
button, input, select {
    font: inherit;
    color: inherit;
}
button {
    padding: 0;
    border: 0;
    background: none;
    white-space: nowrap;
}
svg {
    display: block;
    width: 16px;
    height: 16px;
    flex: none;
}
.sprite {
    position: absolute;
    width: 0;
    height: 0;
}
.mark {
    font: bold 8px "Liberation Serif", serif;
}

/* title bar */
.titlebar {
    display: flex;
    align-items: center;
    gap: 4px;
    flex: none;
    height: 24px;
    padding-left: 2px;
    background: linear-gradient(#222 0, #222 1px, #6a6d70 2px, #4a4d50 11px, #04080c 12px, #04080c 24px);
}
.titlebar h1 {
    color: #d4d4d4;
    font-weight: bold;
    white-space: nowrap;
}
.winbtns {
    display: flex;
    align-self: flex-start;
    gap: 1px;
    margin-left: auto;
    padding-right: 4px;
}
.winbtns button {
    display: flex;
    align-items: center;
    justify-content: center;
    width: 25px;
    height: 17px;
    border: 1px solid #888;
    border-top: 0;
    background: linear-gradient(#777, #444 50%, #000 50%, #222);
}
.winbtns svg, .dialog-head svg {
    width: 12px;
    height: 12px;
}
.winbtns .win-close, .dialog-head .win-close {
    display: flex;
    align-items: center;
    justify-content: center;
    width: 42px;
    height: 17px;
    border: 1px solid #a88;
    border-top: 0;
    background: linear-gradient(#ffb090, #ea7850 48%, #d84810 50%, #ff9a3c);
}

/* menu */
.menubar {
    display: flex;
    align-items: center;
    gap: 10px;
    flex: none;
    height: 27px;
    padding: 0 6px 0 7px;
}
.menubar .tool {
    gap: 2px;
}
.menu-right {
    display: flex;
    align-items: center;
    gap: 8px;
    margin-left: auto;
}
.menu-right .tool {
    gap: 4px;
}
.upload {
    display: flex;
    width: 105px;
    height: 25px;
    border: 1px solid #2a8ad0;
    border-radius: 3px;
    overflow: hidden;
    background: linear-gradient(#d2ecfc, #9ad2f8);
    box-shadow: 0 1px 2px rgba(0, 0, 0, 0.3);
}
.upload-logo {
    display: flex;
    align-items: center;
    justify-content: center;
    width: 30px;
    background: #2f9de8;
}
.upload-logo svg {
    width: 20px;
    height: 18px;
}
.upload-text {
    flex: 1;
    padding-top: 5px;
    color: #4a7ca8;
}

/* tool bars */
.bar {
    display: flex;
    align-items: center;
    gap: 3px;
    flex: none;
    height: 26px;
}
.band {
    display: flex;
    align-items: center;
    gap: 7px;
    height: 24px;
    padding: 0 4px;
    border-radius: 3px;
    background: linear-gradient(#fdfdfd, #f4f4f4);
    white-space: nowrap;
}
.file-band {
    width: 150px;
}
.band-grow {
    flex: 1;
}
.band-end {
    width: 22px;
}
.tool {
    display: flex;
    align-items: center;
    gap: 4px;
}
.tool:disabled {
    color: #8c8c8c;
}
.on {
    gap: 3px;
    height: 22px;
    padding: 0 3px;
    border: 1px solid #0a7cc0;
    background: #e0eef4;
}
.joined {
    display: flex;
    margin: 0 -3px;
}
.caret {
    flex: none;
    width: 5px;
    height: 3px;
    background: currentColor;
    clip-path: polygon(0 0, 100% 0, 50% 100%);
}
.dim {
    color: #999;
}
.sep {
    width: 1px;
    height: 14px;
    margin-right: -2px;
    background: #a8a8a8;
}
.grip {
    width: 2px;
    height: 16px;
    margin: 0 -2px 0 0;
    background: repeating-linear-gradient(#b0b0b0 0, #b0b0b0 2px, transparent 2px, transparent 4px);
}
.more {
    align-self: flex-start;
    margin-left: auto;
    font-size: 12px;
    line-height: 14px;
}
.more-far {
    padding-left: 16px;
}
.letter {
    position: relative;
}
.letter b {
    position: absolute;
    left: 0;
    color: #b01818;
    font: bold 10px "Liberation Sans", sans-serif;
}
.combo {
    display: flex;
    align-items: center;
    width: 72px;
    height: 20px;
    padding: 0 4px 0 2px;
    background: #fff;
}
.combo select {
    flex: 1;
    min-width: 0;
    padding: 0;
    border: 0;
    background: none;
    appearance: none;
}
.combo-short {
    width: 60px;
}
.combo-mode {
    width: 57px;
}
.combo-box {
    width: 57px;
    border: 1px solid #888;
    background: #f4f4f4;
}
.snapbar {
    height: 29px;
}
.offset-band {
    gap: 3px;
    margin-left: -3px;
    color: #888;
}
.offset-band .grip {
    margin-right: 0;
}
.offset-band .combo {
    color: #000;
}
.offset-band .rot-label {
    padding: 0 2px;
    color: #000;
}
.spin {
    display: flex;
    width: 58px;
    height: 20px;
    padding: 0 4px 0 2px;
    border: 1px solid #888;
    background: #f4f4f4;
}
.spin-wide {
    width: 68px;
}
.spin input {
    flex: 1;
    min-width: 0;
    padding: 0 8px 0 0;
    border: 0;
    background: none;
    text-align: right;
}
.spin-arrows {
    display: flex;
    flex-direction: column;
    justify-content: space-evenly;
}
.tick {
    width: 11px;
    height: 11px;
    margin: 0 2px;
    border: 1px solid #888;
    appearance: none;
}

/* scroll bars */
.arr {
    flex: none;
    width: 5px;
    height: 5px;
    background: #555;
}
.arr-up { clip-path: polygon(0 80%, 50% 20%, 100% 80%); }
.arr-down { clip-path: polygon(0 20%, 100% 20%, 50% 80%); }
.arr-left { clip-path: polygon(80% 0, 80% 100%, 20% 50%); }
.arr-right { clip-path: polygon(20% 0, 80% 50%, 20% 100%); }
.vscroll .arr, .hscroll .arr, .slim-arrows .arr {
    width: 8px;
    height: 8px;
    background: #666;
}
.vscroll {
    display: flex;
    flex-direction: column;
    align-items: center;
    width: 17px;
    padding: 5px 0;
    background: linear-gradient(90deg, #e2eefc, #f8fbff);
}
.hscroll {
    display: flex;
    align-items: center;
    flex: none;
    height: 17px;
    background: linear-gradient(#e2eefc, #f8fbff);
}
.thumb {
    display: flex;
    align-items: center;
    justify-content: center;
    border: 1px solid #8c98a8;
    border-radius: 2px;
}
.vscroll .thumb {
    width: 16px;
    margin: 4px 0 auto;
    background: linear-gradient(90deg, #eceef1, #c2c8d0);
}
.hscroll .thumb {
    height: 16px;
    background: linear-gradient(#eceef1, #c2c8d0);
}
.ribs {
    width: 7px;
    height: 8px;
    background: repeating-linear-gradient(#555 0, #555 1px, #fff 1px, #bbb 3px);
}
.hscroll .ribs {
    width: 8px;
    height: 7px;
    background: repeating-linear-gradient(90deg, #555 0, #555 1px, #fff 1px, #bbb 3px);
}

/* panes */
.workspace {
    display: flex;
    flex: 1;
    min-height: 0;
}
.pane-head {
    display: flex;
    align-items: center;
    flex: none;
    gap: 9px;
    height: 16px;
    padding-right: 4px;
    border: 1px solid #777;
    border-left: 0;
    overflow: hidden;
}
.pane-head h2 {
    flex: 1;
    min-width: 0;
    overflow: hidden;
    font-weight: normal;
    font-size: 13px;
    white-space: nowrap;
}
.pane-head svg {
    width: 10px;
    height: 10px;
}
.navpane {
    display: flex;
    flex-direction: column;
    width: 163px;
    margin: 1px 4px 2px 0;
}
.nav-tab {
    flex: none;
    height: 22px;
    border: 1px solid #8c8c8c;
    border-left-color: #bbb;
    border-top-color: #fff;
    background: #f3f3f3;
}
.tree-frame {
    display: flex;
    flex-direction: column;
    flex: 1;
    min-height: 0;
    border: 2px solid #a0a0a0;
}
.tree-tools {
    display: flex;
    align-items: center;
    gap: 7px;
    flex: none;
    height: 28px;
    padding-left: 5px;
    border-bottom: 1px solid #999;
    background: linear-gradient(#fdfdfd, #f2f2f2);
}
.tree-body {
    display: flex;
    flex: 1;
    min-height: 0;
    background: #fff;
    overflow: hidden;
}
.tree {
    position: relative;
    flex: 1;
    min-width: 0;
    overflow: hidden;
    font-family: "Liberation Serif", "Noto Sans CJK SC", sans-serif;
    white-space: nowrap;
}
.tree::before {
    content: "";
    position: absolute;
    top: 10px;
    bottom: 0;
    left: 13px;
    border-left: 1px dotted #888;
}
.node {
    display: flex;
    align-items: center;
    gap: 5px;
    height: 16px;
    padding-left: 9px;
}
.node svg {
    margin-left: 1px;
}
.tg {
    position: relative;
    display: block;
    width: 9px;
    height: 9px;
    border: 1px solid #888;
    background: #fff;
    color: #2448a0;
    font: 9px/7px "DejaVu Sans", sans-serif;
    text-align: center;
}
.tree ul {
    position: relative;
    padding-left: 44px;
}
.tree ul::before {
    content: "";
    position: absolute;
    top: 0;
    bottom: 8px;
    left: 32px;
    border-left: 1px dotted #888;
}
.tree ul li {
    position: relative;
    display: flex;
    align-items: center;
    gap: 4px;
    height: 16px;
}
.tree ul li::before {
    content: "";
    position: absolute;
    left: -11px;
    width: 10px;
    border-top: 1px dotted #888;
}
.picked {
    padding-right: 6px;
    background: #f0f0f0;
}
.tree-thumb {
    height: 410px;
}
.tree-hscroll {
    padding: 0 22px 0 5px;
}
.tree-hscroll .thumb {
    width: 95px;
    margin: 0 auto 0 5px;
}

.slim {
    display: flex;
    flex-direction: column;
    width: 35px;
    margin: 1px 4px 1px 0;
}
.slim .pane-head {
    gap: 1px;
    border-left: 1px solid #777;
}
.slim .pane-head h2 {
    font-size: 12px;
}
.pager {
    display: flex;
    padding: 3px 0 3px 2px;
}
.pager button {
    display: flex;
    align-items: center;
    justify-content: center;
    width: 16px;
    height: 16px;
    border: 1px solid #aaa;
    background: linear-gradient(#fff, #d8dce4);
}
.pager .arr {
    width: 7px;
    height: 7px;
    background: #3a58a8;
}
.slim-box {
    display: flex;
    flex-direction: column;
    height: 332px;
    padding: 4px;
    border: 1px solid #888;
    outline: 1px solid #ddd;
    background: #fff;
}
.add {
    height: 20px;
    margin-bottom: 4px;
    padding-left: 3px;
    border: 1px solid #999;
    background: #f3f3f3;
    overflow: hidden;
    text-align: left;
}
.slim-list {
    display: flex;
    justify-content: flex-end;
    height: 300px;
    padding-bottom: 17px;
    border: 1px solid #888;
    border-right-width: 2px;
    background: repeating-linear-gradient(#fff 0, #fff 18px, #bbb 18px, #bbb 19px);
}
.slim-list .thumb {
    height: 92px;
}
.slim .slim-second {
    margin-top: 7px;
    padding-right: 2px;
}
.slim-tree {
    display: flex;
    flex-direction: column;
    flex: 1;
    margin-top: 1px;
    border: 1px solid #999;
    background: #fff;
}
.slim-tree div {
    display: flex;
    align-items: center;
    gap: 7px;
    height: 14px;
    padding-left: 9px;
}
.chip {
    width: 7px;
    height: 11px;
    border: 1px solid #557;
    background: #2a90c0;
}
.slim-tree .slim-arrows {
    height: 17px;
    margin-top: auto;
    padding-left: 5px;
    background: #e8f1fc;
}

.propspane {
    display: flex;
    flex-direction: column;
    width: 234px;
    margin: 1px 3px 1px 0;
}
.props-frame {
    flex: 1;
    padding: 0 1px;
    border: 1px solid #98a0a8;
    background: #fff;
}

/* data grids */
.grid {
    border-collapse: collapse;
    table-layout: fixed;
    font-family: "Liberation Serif", "Noto Sans CJK SC", sans-serif;
}
.grid th, .grid td {
    padding: 0 0 0 2px;
    border: 1px solid #c0c0c0;
    overflow: hidden;
    text-align: left;
    font-weight: normal;
    white-space: nowrap;
}
.grid th {
    padding: 0;
    background: linear-gradient(90deg, #fff, #f2f2f2);
    text-align: center;
}
.grid thead th {
    background: linear-gradient(#fff, #f2f2f2);
}
.grid svg {
    display: inline-block;
    width: 12px;
    height: 12px;
    vertical-align: -2px;
}
.grid th.hot {
    background: #ffd592;
    color: #5c0054;
}
.grid thead th.hot {
    background: linear-gradient(#fcdca0, #f2c060);
}
.props {
    width: 229px;
}
.props tr {
    height: 19px;
}
.props thead tr {
    height: 23px;
}
.c-no { width: 20px; }
.c-name { width: 121px; }
.props td:nth-child(2) {
    padding-left: 19px;
}
.props td:nth-child(3) {
    color: #888;
}
.props .current td {
    background: #d9eaf4;
}
.props .current td:nth-child(2) {
    background: #0080c4;
    color: #fff;
}
.props .key td:nth-child(2) {
    color: #0000e0;
}
.props .more-row td:nth-child(2) {
    padding-left: 2px;
    color: #888;
}
.expand {
    display: inline-block;
    width: 12px;
    height: 12px;
    margin-right: 5px;
    border: 1px solid #999;
    background: #f3f3f3;
    color: #000;
    line-height: 10px;
    text-align: center;
}

.main {
    display: flex;
    flex-direction: column;
    flex: 1;
    min-width: 0;
}

/* drawing area */
.canvas {
    position: relative;
    flex: 1;
    min-height: 0;
    margin-right: 1px;
    overflow: hidden;
    background: #000;
}
.drawing {
    width: 100%;
    height: 100%;
}
.axis-no {
    fill: #d8d8d8;
    font: 17px "DejaVu Sans Condensed", sans-serif;
    mix-blend-mode: difference;
}
.note {
    fill: #fff;
    font: 54px "DejaVu Sans Condensed", "Noto Sans CJK SC", sans-serif;
    mix-blend-mode: difference;
}
.tag {
    fill: #ff8080;
    font: 66px "DejaVu Sans Condensed", sans-serif;
    mix-blend-mode: difference;
}
.dialog {
    position: absolute;
    top: 245px;
    left: 151px;
    width: 258px;
    border: 2px solid #2a2d30;
    border-top-color: #777;
    border-radius: 5px 5px 0 0;
    background: #f3f3f3;
}
.dialog-head {
    display: flex;
    justify-content: space-between;
    height: 22px;
    padding: 0 3px 0 6px;
    background: linear-gradient(#666, #333 45%, #0a0a0a 50%);
    color: #fff;
}
.dialog-head h2 {
    line-height: 22px;
}
.dialog-head .win-close {
    height: 15px;
}
.dialog-body {
    display: flex;
    flex-direction: column;
    align-items: center;
    gap: 16px;
    padding: 12px 12px 16px;
}
.dialog-msg {
    display: flex;
    align-items: center;
    gap: 24px;
    align-self: stretch;
}
.dialog-msg svg {
    width: 32px;
    height: 34px;
}
.ok {
    width: 86px;
    height: 23px;
    border: 1px solid #777;
    border-radius: 2px;
    outline: 1px dotted #222;
    outline-offset: -4px;
    background: linear-gradient(#f6f6f6, #eaeaea 50%, #dadada 50%, #d2d2d2);
    box-shadow: inset 0 0 0 2px #6cd0f0;
}

/* rebar editor */
.editor {
    display: flex;
    flex: none;
    height: 202px;
    padding: 0 1px 1px 0;
}
.editor-side {
    display: flex;
    flex-direction: column;
    gap: 4px;
    width: 13px;
    padding: 2px 0 3px;
}
.editor-side svg {
    width: 8px;
    height: 8px;
}
.editor-side i {
    flex: 1;
    margin-left: 5px;
    border-left: 2px dotted #333;
}
.editor-main {
    display: flex;
    flex-direction: column;
    flex: 1;
    min-width: 0;
}
.editor-main .bar {
    height: 27px;
}
.sheet {
    display: flex;
    flex-direction: column;
    justify-content: space-between;
    flex: 1;
    min-height: 0;
    border: 1px solid #98a0a8;
    border-left-color: #c0c0c0;
    background: #fff;
    overflow: hidden;
}
.rebar {
    width: 100%;
}
.w-no { width: 32px; }
.w-name { width: 73px; }
.w-dia { width: 56px; }
.w-grade { width: 36px; }
.w-pic { width: 33px; }
.w-shape { width: 211px; }
.w-calc { width: 166px; }
.w-desc { width: 156px; }
.w-len { width: 61px; }
.w-num { width: 38px; }
.w-lap { width: 39px; }
.w-loss { width: 49px; }
.rebar thead tr {
    height: 20px;
}
.rebar tbody tr {
    height: 29px;
}
.rebar tbody .row-first {
    height: 34px;
}
.rebar tbody .blank {
    height: 19px;
}
.rebar td {
    background: #ccfed8;
}
.rebar .blank td {
    background: #fff;
}
.rebar tbody td:nth-child(2) {
    border-right: 1px solid #000;
}
.rebar .focus {
    background: #a9ead4;
    color: #f00;
}
.rebar .mid {
    padding: 0;
    text-align: center;
}
.shape {
    display: flex;
    justify-content: center;
    gap: 2px;
}
.hook {
    width: 120px;
    border: solid #000;
    border-width: 0 2px 2px;
    color: #f00;
}
.straight {
    display: inline-block;
    width: 157px;
    border-bottom: 2px solid #000;
    color: #f00;
}
.sheet-hscroll {
    padding: 0 6px 0 3px;
}
.sheet-hscroll .thumb {
    width: 525px;
    margin: 0 auto 0 6px;
}

/* status */
.statusbar {
    display: flex;
    gap: 3px;
    flex: none;
    height: 21px;
    border-bottom: 1px solid #000;
    font-family: "Liberation Serif", "Noto Sans CJK SC", sans-serif;
    white-space: nowrap;
}
.statusbar span {
    padding: 2px 1px;
    border: 1px solid #d8d8d8;
    background: #f8f8f8;
}
.s-xy { width: 147px; }
.s-h { width: 77px; }
.s-b { width: 96px; }
.s-n { width: 48px; }
.s-msg { flex: 1; }
.s-fps { width: 71px; }
.taskbar {
    flex: none;
    height: 4px;
    background: repeating-linear-gradient(90deg, #909090 0, #909090 158px, #d8d8d8 158px, #d8d8d8 161px);
}
.ime {
    position: absolute;
    right: 20px;
    bottom: 27px;
    display: flex;
    align-items: flex-end;
}
.ime-pet {
    padding: 1px 2px 2px;
    border: 2px solid #1e88ff;
    background: #dbe3ee;
}
.ime-pet svg {
    width: 32px;
    height: 34px;
}
.ime-keys {
    display: flex;
    align-items: center;
    gap: 7px;
    height: 25px;
    padding: 0 4px;
    border: 1px solid #1e88ff;
    background: #fff;
    color: #1e88ff;
}
.ime-keys b {
    font-size: 13px;
}
.ime-keys svg {
    width: 14px;
    height: 14px;
    fill: #1e88ff;
}
```
